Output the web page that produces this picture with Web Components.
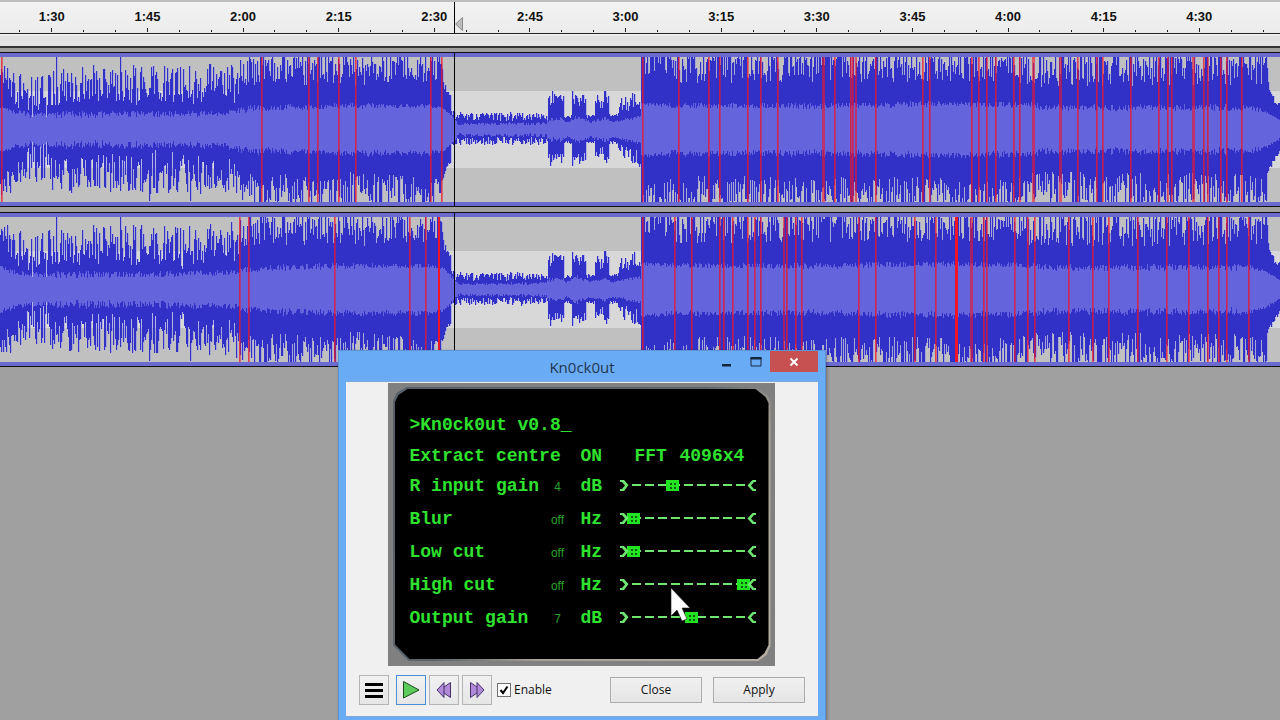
<!DOCTYPE html>
<html lang="en">
<head>
<meta charset="utf-8">
<title>Kn0ck0ut</title>
<style>
  html, body { margin: 0; height: 100%; }
  body { background: #a0a0a0; overflow: hidden; font-family: "Liberation Sans", Arial, sans-serif; }
</style>
</head>
<body>
<audio-editor></audio-editor>

<script>
function define(name, html, setup) {
  customElements.define(name, class extends HTMLElement {
    connectedCallback() {
      if (this.shadowRoot) return;
      const root = this.attachShadow({ mode: 'open' });
      root.innerHTML = typeof html === 'function' ? html(this) : html;
      if (setup) setup(this, root);
    }
  });
}

/* ---------- time ruler ---------- */
define('time-ruler', `
<style>
  :host { display: block; position: relative; background: linear-gradient(#f2f2f2, #ececec); border-top: 2px solid #bdbdbd; border-bottom: 1px solid #222; height: 31px; }
  .row { display: flex; height: 100%; padding: 0 1px 0 4px; }
  .mark { flex: 3 1 0; min-width: 0; display: flex; flex-direction: column; justify-content: space-between; }
  .mark.tail { flex: 1 1 0; justify-content: flex-end; }
  .label { font: bold 13px/16px "Liberation Sans", Arial, sans-serif; color: #111; text-align: center; padding-top: 7px; }
  .ticks { display: flex; align-items: flex-end; height: 5px; padding-bottom: 1px; }
  .ticks span { flex: 1; display: flex; justify-content: center; }
  i { display: block; width: 1px; height: 2px; background: #222; }
  i.major { height: 4px; }
  .play { position: absolute; left: 35.5%; top: 0; height: 31px; border-left: 1px solid #000; }
  svg { display: block; margin-top: 15px; }
</style>
<div class="row"></div>
<div class="play"><svg width="9" height="14" viewBox="0 0 9 14"><path d="M0.5 7 L7.5 .5 V13.5 Z" fill="#bdbdbd" stroke="#888"/></svg></div>`,
(host, root) => {
  let out = '';
  for (let s = 90; s <= 270; s += 15) {
    const t = Math.floor(s / 60) + ':' + String(s % 60).padStart(2, '0');
    out += `<div class="mark"><div class="label">${t}</div><div class="ticks"><span><i></i></span><span><i class="major"></i></span><span><i></i></span></div></div>`;
  }
  out += '<div class="mark tail"><div class="ticks"><span><i></i></span></div></div>';
  root.querySelector('.row').innerHTML = out;
});

/* ---------- waveform ---------- */
const PEAK = [[0,50,70],[5,44,66],[12,26,62],[20,18,58],[38,16,54],[55,24,62],[95,24,64],[140,24,64],[180,22,62],[215,28,66],[234,30,68],[245,44,76],[330,44,80],[355,42,78],[430,48,80],[440,50,78],[444,38,46],[450,28,36],[451,13,20],[456,8,17],[480,8,16],[520,8,17],[547,8,15],[548,22,40],[555,24,36],[563,26,40],[564,11,14],[571,11,16],[572,26,40],[585,20,34],[586,11,15],[594,11,15],[595,24,36],[601,18,30],[602,16,22],[604,30,42],[608,22,34],[609,11,15],[617,12,16],[618,16,30],[640,20,40],[641,76,80],[643,56,84],[680,46,82],[1000,48,84],[1040,42,80],[1250,44,82],[1266,46,76],[1269,36,44],[1274,26,32],[1280,20,26]];
const RMS = [[0,20,24],[12,15,20],[30,11,17],[60,11,18],[130,11,18],[228,13,19],[250,17,24],[340,20,26],[430,21,25],[444,19,21],[452,10,14],[458,4,6],[545,4,7],[550,7,12],[562,9,12],[566,6,7],[576,10,14],[590,6,8],[605,9,13],[612,6,8],[640,10,14],[641,24,28],[668,21,26],[820,20,26],[930,22,28],[1035,21,27],[1040,18,25],[1250,18,25],[1266,16,18],[1280,8,9]];

function at(table, x) {
  let k = 0;
  while (k < table.length - 2 && table[k + 1][0] <= x) k++;
  const a = table[k], b = table[k + 1], f = Math.min(1, (x - a[0]) / (b[0] - a[0]));
  return [a[1] + (b[1] - a[1]) * f, a[2] + (b[2] - a[2]) * f];
}
function random(seed) {
  return () => { seed = (seed * 1664525 + 1013904223) >>> 0; return seed / 4294967296; };
}
function columns(up, down) {
  const c = 72;
  let d = '';
  up.forEach((u, x) => { d += `M${x} ${c - Math.round(u)}h1V${c + 1 + Math.round(down[x])}h-1z`; });
  return d;
}

define('wave-track', `
<style>
  :host { display: block; position: relative; border-top: 1px solid #111; border-bottom: 1px solid #111; background: #6a6acf; padding: 4px 0; }
  svg { display: block; width: 100%; height: 145px; background: #c0c0c0; }
  .play { position: absolute; top: 0; bottom: 0; left: 35.5%; width: 1px; background: #000; }
</style>
<svg viewBox="0 0 1280 145" preserveAspectRatio="none" shape-rendering="crispEdges" aria-hidden="true"></svg>
<div class="play"></div>`,
(host, root) => {
  const rnd = random(+host.getAttribute('seed'));
  const shape = random(77);
  const up = [], down = [], rUp = [], rDown = [];
  for (let x = 0; x < 1280; x++) {
    const [lo, hi] = at(PEAK, x), [rl, rh] = at(RMS, x);
    const mix = s => Math.max(0, Math.min(1, s + (rnd() - .5) * .2));
    const spike = q => Math.min(72, lo + (hi - lo) * q);
    up.push(spike(mix(shape())));
    down.push(spike(mix(shape())) * (x > 451 && x < 641 ? .93 : 1));
    if (shape() < .08 && x < 236) {
      const cut = .6 + rnd() * .3;
      up[x] *= cut; down[x] *= cut;
    }
    if (x === 32 || x === 46) up[x] = down[x] = 12;
    const r = rl + (rh - rl) * rnd();
    rUp.push(Math.min(r, up[x])); rDown.push(Math.min(r - 1 + 2 * rnd(), down[x]));
  }
  [56, 120].forEach(x => { up[x] = 72; });
  [149, 190].forEach(x => { down[x] = 71; });
  const soft = a => a.map((v, x) => Math.max(v, a[x - 1] || 0));
  const reds = host.getAttribute('clips').split(' ').map(s => {
    const [x, w, strong] = s.split(':');
    return `<rect x="${x}" width="${w || 2}" height="145" fill="#f01428" opacity="${strong ? 1 : w ? .6 : .5}"/>` +
      (w ? '' : `<rect x="${x}" width="1" height="145" fill="#f01428" opacity=".5"/>`);
  }).join('');
  root.querySelector('svg').innerHTML =
    `<rect y="34" width="1280" height="77" fill="#d8d8d8"/>
     <path d="${columns(soft(up), soft(down))}" fill="#8484f4" opacity=".45"/>
     <path d="${columns(up, down)}" fill="#3131c8"/>
     <path d="${columns(rUp, rDown)}" fill="#6464dc"/>${reds}`;
});

/* ---------- plugin display ---------- */
const TERMINAL = 'font: bold 18px/20px "Liberation Mono", "Courier New", monospace; color: #2ee22e;';

define('param-row', host => {
  const v = host.getAttribute('value');
  return `
<style>
  :host { display: grid; grid-template-columns: 134px 28px 38px 1fr; align-items: center; height: 33px; }
  label, .unit { ${TERMINAL} white-space: nowrap; }
  output { font: 12px/20px "Liberation Sans", Arial, sans-serif; color: #28a428; text-align: center; padding-top: 2px; }
  .unit { padding-left: 9px; }
  .slider { position: relative; width: 138px; height: 13px; margin-left: 10px; }
  input { appearance: none; display: block; width: 123px; height: 13px; margin: 0 7px; background:
    repeating-linear-gradient(90deg, #6fe66f 0 9px, transparent 9px 13px) 5px 5px / 114px 2px no-repeat; }
  input::-webkit-slider-thumb { appearance: none; width: 13px; height: 11px; border: 0; background:
    linear-gradient(#0c5c0c, #0c5c0c) 4px 3px / 2px 2px no-repeat,
    linear-gradient(#0c5c0c, #0c5c0c) 8px 3px / 2px 2px no-repeat,
    linear-gradient(#0c5c0c, #0c5c0c) 4px 7px / 2px 2px no-repeat,
    linear-gradient(#0c5c0c, #0c5c0c) 8px 7px / 2px 2px no-repeat, #22e422; }
  svg { position: absolute; inset: 0; pointer-events: none; }
</style>
<label for="v">${host.getAttribute('name')}</label>
<output for="v">${host.getAttribute('shown')}</output>
<span class="unit">${host.getAttribute('unit')}</span>
<div class="slider"><input id="v" type="range" min="0" max="100" value="${v}">
<svg width="138" height="13" fill="#6fe66f"><path d="M0 1H4L8.500 6L4 12H0V10H2L5 6.500L2 3H0Z"/><path d="M136 1H132.500L127.500 6.500L132.500 12H136V10H134L131 6.500L134 3H136Z"/></svg></div>`;
});

define('knockout-panel', `
<style>
  :host { display: block; background: #808080; padding: 4px 4px 5px 5px; width: 378px; }
  .bezel { background: linear-gradient(135deg, #56606a 0%, #5c646a 48%, #a8a296 64%, #b4aca0 100%); padding: 2px; clip-path: polygon(14px 0, calc(100% - 14px) 0, calc(100% - 3px) 8px, 100% 15px, 100% calc(100% - 15px), calc(100% - 4px) calc(100% - 6px), calc(100% - 12px) 100%, 16px 100%, 0 calc(100% - 16px), 0 15px, 4px 6px); }
  .screen { background: #000; height: 220px; padding: 24px 8px 26px 15px; clip-path: polygon(13px 0, calc(100% - 13px) 0, calc(100% - 3px) 8px, 100% 14px, 100% calc(100% - 14px), calc(100% - 4px) calc(100% - 6px), calc(100% - 11px) 100%, 15px 100%, 0 calc(100% - 15px), 0 14px, 4px 6px); }
  h1, .mode { ${TERMINAL} margin: 0; }
  h1 { height: 31px; padding-top: 2px; box-sizing: border-box; }
  .mode { display: grid; grid-template-columns: 171px 54px 45px 1fr; align-items: start; height: 23px; white-space: pre; padding-top: 2px; }
  button { all: unset; }
</style>
<div class="bezel"><div class="screen">
  <h1>&gt;Kn0ck0ut v0.8_</h1>
  <div class="mode"><span>Extract centre</span><button type="button">ON</button><span>FFT</span><button type="button">4096x4</button></div>
  <param-row name="R input gain" shown="4" unit="dB" value="36"></param-row>
  <param-row name="Blur" shown="off" unit="Hz" value="0"></param-row>
  <param-row name="Low cut" shown="off" unit="Hz" value="0"></param-row>
  <param-row name="High cut" shown="off" unit="Hz" value="100"></param-row>
  <param-row name="Output gain" shown="7" unit="dB" value="53"></param-row>
</div></div>`);

/* ---------- dialog controls ---------- */
define('tool-button', host => `
<style>
  :host { display: block; }
  button { display: grid; place-items: center; box-sizing: border-box; width: 30px; height: 30px; padding: 0; border: 1px solid ${host.hasAttribute('active') ? '#4a90d9' : '#b4b4b4'}; background: linear-gradient(#f1f1f1, #e6e6e6); }
</style>
<button type="button" aria-label="${host.getAttribute('label')}"><slot></slot></button>`);

define('push-button', `
<style>
  :host { display: block; }
  button { box-sizing: border-box; width: 92px; height: 26px; padding: 0; border: 1px solid #acacac; background: linear-gradient(#f1f1f1, #e4e4e4); font: 12px/20px "Open Sans", "Noto Sans", sans-serif; color: #111; }
</style>
<button type="button"><slot></slot></button>`);

define('check-box', `
<style>
  :host { display: block; }
  label { display: flex; align-items: center; gap: 3px; font: 12px/20px "Open Sans", "Noto Sans", sans-serif; color: #111; }
  input { appearance: none; box-sizing: border-box; width: 14px; height: 14px; margin: 0; border: 1px solid #707070; background: #fff; }
  input:checked { background: #fff url('data:image/svg+xml,<svg xmlns="http://www.w3.org/2000/svg" viewBox="0 0 12 12"><path d="M2.5 6L5 9L9.5 2.5" fill="none" stroke="black" stroke-width="2"/></svg>'); }
</style>
<label><input type="checkbox" checked><slot></slot></label>`);

define('plugin-window', `
<style>
  :host { display: block; box-sizing: border-box; width: 488px; background: #6aabf5; border: 1px solid #5a94d6; padding: 0 7px 7px; box-shadow: 1px 1px 3px #0005; }
  header { display: grid; grid-template-columns: 1fr auto 1fr; height: 30px; }
  h2 { grid-column: 2; margin: 0; padding-top: 3px; font: 15px/26px "Open Sans", "Noto Sans", sans-serif; color: #22384f; }
  .controls { display: flex; justify-content: flex-end; align-items: flex-start; }
  .controls button { border: 0; padding: 0; background: none; width: 29px; height: 21px; display: grid; place-items: center; }
  .controls .close { width: 48px; background: #c75050; }
  .body { background: #f0f0f0; padding: 1px 13px 11px; border: 1px solid #80a8d8; border-width: 1px 0; }
  .stage { display: flex; justify-content: center; margin-bottom: 9px; padding-right: 2px; }
  footer { display: flex; align-items: center; gap: 3px; }
  .menu { margin-right: 4px; }
  check-box { margin: 0 auto 0 2px; }
  push-button + push-button { margin-left: 8px; }
</style>
<header><h2><slot name="title"></slot></h2>
  <div class="controls">
    <button type="button" aria-label="Minimize"><svg width="12" height="12"><path d="M1 8h9v2.5h-9z" fill="#14283c"/></svg></button>
    <button type="button" aria-label="Maximize"><svg width="12" height="12"><path d="M1 2v8h10V2z" fill="none" stroke="#14283c"/><path d="M.5 1h11v2.5H.5z" fill="#14283c"/></svg></button>
    <button type="button" class="close" aria-label="Close window"><svg width="10" height="10"><path d="M1.5 1.5L8.5 8.5M8.5 1.5L1.5 8.5" stroke="#fff" stroke-width="2"/></svg></button>
  </div></header>
<div class="body">
  <div class="stage"><slot></slot></div>
  <footer>
    <tool-button class="menu" label="Manage"><svg width="18" height="15"><path d="M0 0h18v3H0zM0 6h18v3H0zM0 12h18v3H0z"/></svg></tool-button>
    <tool-button label="Play" active><svg width="18" height="20"><path d="M1.5 1.5V18L17 10Z" fill="#5ccb5c" stroke="#1f4a1f"/></svg></tool-button>
    <tool-button label="Skip back"><svg width="16" height="18"><path d="M8 1.5V6L14.500 1.500V16.500L8 12V16.500L1 9Z M8 6V12" fill="#b08ad8" stroke="#46306a"/></svg></tool-button>
    <tool-button label="Skip forward"><svg width="16" height="18"><path d="M8 1.5V6L1.500 1.500V16.500L8 12V16.500L15 9Z M8 6V12" fill="#b08ad8" stroke="#46306a"/></svg></tool-button>
    <check-box>Enable</check-box>
    <push-button>Close</push-button>
    <push-button>Apply</push-button>
  </footer>
</div>`);

/* ---------- whole editor ---------- */
define('audio-editor', `
<style>
  :host { display: flex; flex-direction: column; position: relative; min-height: 100vh; }
  .strip { height: 12px; background: linear-gradient(#f4f4f4, #e2e2e2 20%, #e4e4e4); border-bottom: 2px solid #333; margin-bottom: 4px; }
  wave-track + wave-track { margin-top: 5px; }
  plugin-window { position: absolute; left: 338px; top: 350px; }
  .pointer { position: absolute; left: 670px; top: 587px; pointer-events: none; }
</style>
<time-ruler></time-ruler>
<div class="strip"></div>
<wave-track seed="11" clips="1 261 308 317 338 355 430 441 642 678 708 719 747 760 777 822:3 834 850 852 855:2 875 922 929 971 978 986 995 1013 1019 1032:3 1059:3 1077 1096 1102 1130 1158 1167 1171 1192:3 1203 1207 1220 1226 1241"></wave-track>
<wave-track seed="29" clips="239 248 334 409 425 438:2:1 642 674 691 719 723 732 747 754 760 783:2 786 795 801 858 875 914 935 955:3:1 970:3 983 986 1014 1027 1034 1068 1092 1108 1137 1166 1188 1207 1218 1226 1248"></wave-track>
<plugin-window><span slot="title">Kn0ck0ut</span><knockout-panel></knockout-panel></plugin-window>
<svg class="pointer" width="22" height="36" aria-hidden="true"><path d="M1 1V29L7 23L12 34L17 32L12 21H20Z" fill="#fff" stroke="#222" stroke-width=".6"/></svg>`);
</script>
</body>
</html>
